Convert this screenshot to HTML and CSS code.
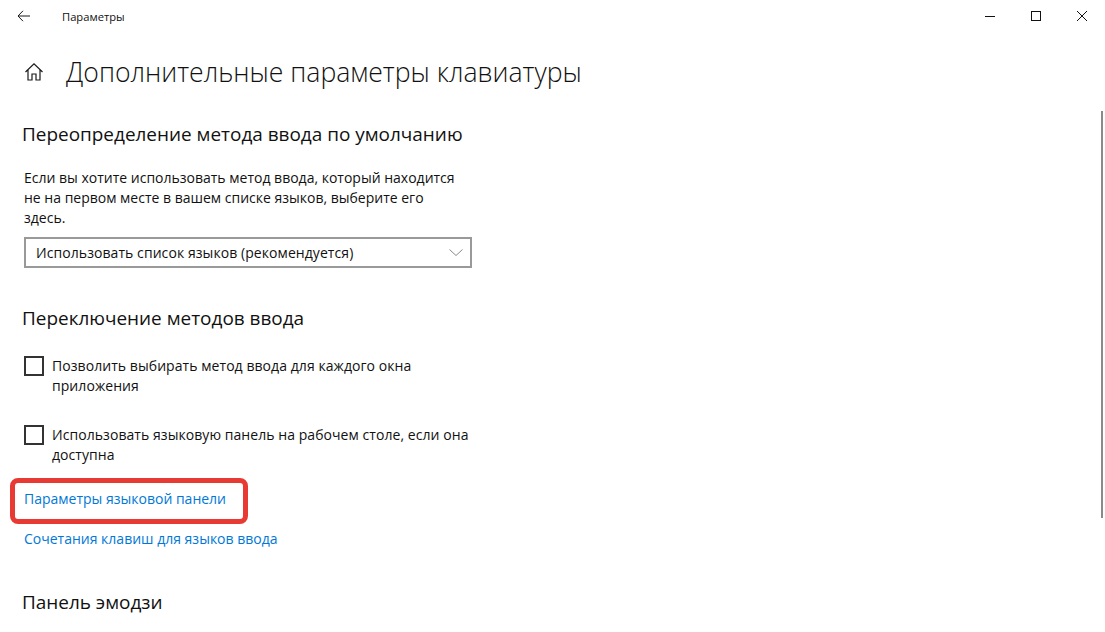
FILE: index.html
```html
<!DOCTYPE html>
<html lang="ru">
<head>
<meta charset="utf-8">
<title>Параметры</title>
<link rel="stylesheet" href="styles.css">
</head>
<body>
<div class="window">
  <header class="titlebar">
    <div class="back">
      <svg width="16" height="16" viewBox="0 0 16 16"><path d="M2 8H14M2 8L7 2.8M2 8L7 13.2" fill="none" stroke="#1a1a1a" stroke-width="1"/></svg>
    </div>
    <span class="app-name">Параметры</span>
    <div class="controls">
      <svg class="ctl" width="46" height="32" viewBox="0 0 46 32"><path d="M18 16.5H28" stroke="#111" stroke-width="1"/></svg>
      <svg class="ctl" width="46" height="32" viewBox="0 0 46 32"><rect x="18.5" y="11.5" width="9" height="9" fill="none" stroke="#111" stroke-width="1"/></svg>
      <svg class="ctl" width="46" height="32" viewBox="0 0 46 32"><path d="M18 11L28 21M28 11L18 21" stroke="#111" stroke-width="1"/></svg>
    </div>
  </header>
  <main class="content">
    <div class="page-head">
      <svg class="home" width="20" height="20" viewBox="0 0 20 20"><path d="M1.5 10L10 1.8L18.5 10M4 8V18H8V12H12V18H16V8" fill="none" stroke="#1a1a1a" stroke-width="1.2"/></svg>
      <h1>Дополнительные параметры клавиатуры</h1>
    </div>
    <section class="sec-one">
      <h2>Переопределение метода ввода по умолчанию</h2>
      <p class="desc">Если вы хотите использовать метод ввода, который находится не на первом месте в вашем списке языков, выберите его здесь.</p>
      <div class="select">
        <span>Использовать список языков (рекомендуется)</span>
        <svg width="14" height="7" viewBox="0 0 14 7"><path d="M0.5 0.5L7 6.5L13.5 0.5" fill="none" stroke="#8a8a8a" stroke-width="1"/></svg>
      </div>
    </section>
    <section class="sec-two">
      <h2>Переключение методов ввода</h2>
      <label class="check"><span class="box"></span><span class="check-text">Позволить выбирать метод ввода для каждого окна приложения</span></label>
      <label class="check"><span class="box"></span><span class="check-text">Использовать языковую панель на рабочем столе, если она доступна</span></label>
      <a class="link link-one">Параметры языковой панели<span class="annotation"></span></a>
      <a class="link link-two">Сочетания клавиш для языков ввода</a>
    </section>
    <section class="sec-three">
      <h2>Панель эмодзи</h2>
    </section>
  </main>
  <div class="scrollbar"></div>
</div>
</body>
</html>
```
FILE: styles.css
```css
* { box-sizing: border-box; }
html, body { margin: 0; padding: 0; background: #fff; }
body {
  width: 1105px;
  height: 632px;
  overflow: hidden;
  font-family: "Open Sans", "Noto Sans", sans-serif;
  color: #111;
}
.window { position: relative; width: 1105px; height: 632px; overflow: hidden; }
.titlebar { display: flex; align-items: center; height: 32px; }
.back { width: 48px; display: flex; justify-content: center; margin-top: -1px; }
.app-name { margin: 2px 0 0 14px; font-size: 11.2px; line-height: 16px; }
.controls { display: flex; margin-left: auto; }
.ctl { display: block; }
.content { padding: 0 0 0 22px; }
.page-head { display: flex; align-items: center; margin-top: 23px; height: 34px; }
.home { margin-left: 2px; }
h1 { margin: 0 0 0 22px; font-size: 26.6px; line-height: 34px; font-weight: 300; white-space: nowrap; }
h2 { margin: 0; font-size: 18.95px; line-height: 26px; font-weight: 400; white-space: nowrap; }
.sec-one { margin-top: 32px; }
.desc { margin: 21px 0 0 2px; width: 436px; font-size: 14px; line-height: 20px; }
.select {
  display: flex; align-items: center; justify-content: space-between;
  width: 448px; height: 31px; margin: 9px 0 0 2px; padding: 0 7px 0 10px;
  border: 2px solid #999; font-size: 14px; letter-spacing: 0.07px;
}
.sec-two { margin-top: 37px; }
.check { display: flex; align-items: flex-start; width: 446px; margin: 0 0 0 2px; font-size: 14px; line-height: 20px; letter-spacing: 0.06px; }
.sec-two h2 + .check { margin-top: 25px; }
.check + .check { margin-top: 29px; }
.box { flex: none; width: 20px; height: 20px; border: 2px solid #333; margin: 0 8px 0 0; }
.check-text { display: block; }
.link { position: relative; display: block; margin-left: 2px; font-size: 14px; line-height: 20px; color: #0078d7; white-space: nowrap; }
.link-one { margin-top: 24px; }
.link-two { margin-top: 20px; }
.annotation {
  position: absolute; left: -14px; top: -11px; width: 238px; height: 46px;
  border: 5px solid #e83a33; border-radius: 8px;
}
.sec-three { margin-top: 40px; }
.scrollbar { position: absolute; left: 1101px; top: 111px; width: 2px; height: 407px; background: #8a8a8a; }
```
